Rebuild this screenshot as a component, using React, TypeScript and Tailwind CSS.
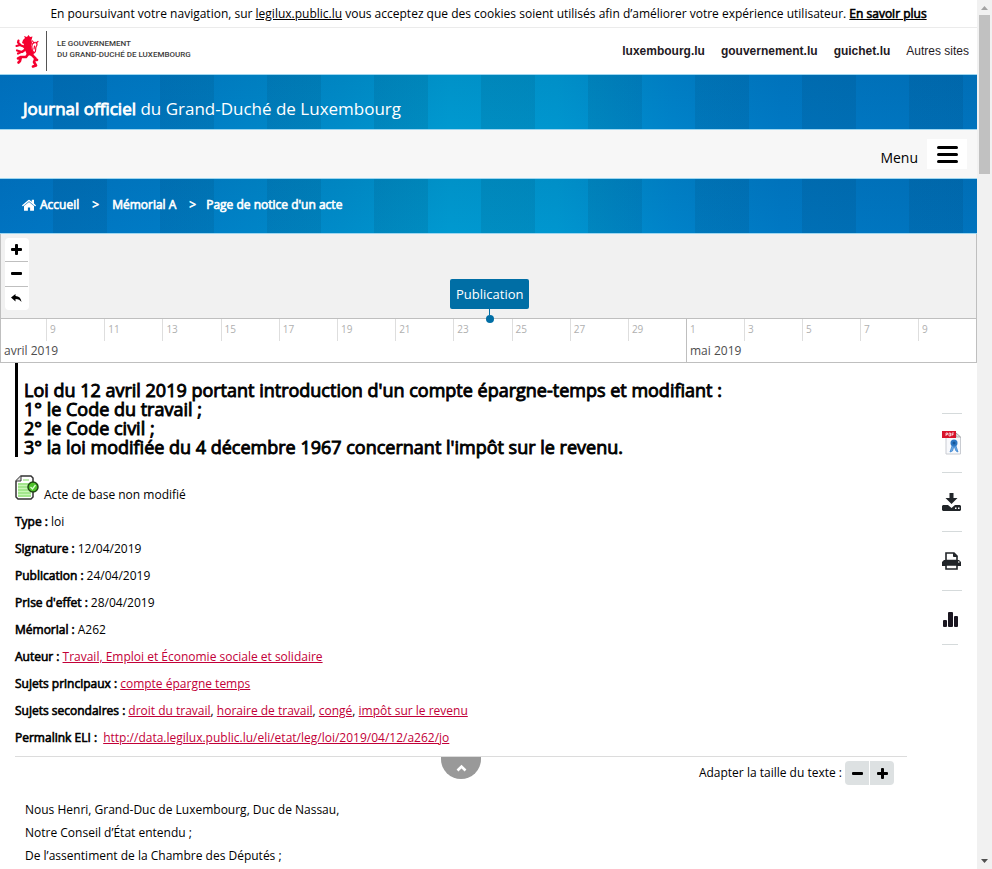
import React from "react";

const BAND =
  "border-y border-[#9ed6f0] bg-[image:linear-gradient(180deg,rgba(0,30,70,0.06),transparent),repeating-linear-gradient(90deg,transparent_0_53px,rgba(0,30,50,0.09)_53px_107px),linear-gradient(90deg,#0073c1_0%,#007bc5_16%,#008cc9_35%,#0099d0_46%,#0096cf_57%,#0082c9_69%,#0078c3_80%,#0073bd_100%)]";
const STRONG = "font-normal [-webkit-text-stroke:0.05em_currentColor]";
const LINK = "text-[#c20038] underline";

function Lion() {
  return (
    <svg viewBox="0 0 25 33" className="h-[33px] w-[25px]" aria-hidden="true">
      <g fill="#f5002f" stroke="none">
        <path d="M9 5 L11 3 L10 1 L13 2 L14.500 0 L16 2 L18.500 1.500 L17.500 5 L18 8 L17 11 L18 15 L20 18 L19 21 L13 20 L11 15 L9 12 L10 9 L8 8 Z" />
      </g>
      <g fill="none" stroke="#f5002f" strokeLinecap="round" strokeLinejoin="round">
        <path d="M11 12 L7 10.500 L4 7.500 M6 10 L2.500 11 M4 7.500 L4.500 5.500" strokeWidth="2.200" />
        <path d="M12 14 L8 17 L3 15.500 M7 17 L4 18.500" strokeWidth="2.200" />
        <path d="M15 18 L12 22 L7 22 L6 26 M7 22 L4 23.500 M6 26 L4.500 27.500" strokeWidth="2.600" />
        <path d="M17 19 L21.500 23.500 L20 27 L22 30.500 L19 31.500 M21 24 L23 25" strokeWidth="2.600" />
        <path d="M20 18 C17 14 17 9 20 7.500 C23 6.500 24 9 22 12 C21 14 23 16 20 18 M20 8 L18.500 6 M22 8 L24 6.500 M20.500 11 L20 14" strokeWidth="1.200" />
      </g>
    </svg>
  );
}

function PlusIcon() {
  return (
    <svg viewBox="0 0 11 11" className="size-[11px]" aria-hidden="true" fill="currentColor">
      <path d="M4 1 Q4 0 5 0 H6 Q7 0 7 1 V4 H10 Q11 4 11 5 V6 Q11 7 10 7 H7 V10 Q7 11 6 11 H5 Q4 11 4 10 V7 H1 Q0 7 0 6 V5 Q0 4 1 4 H4 Z" />
    </svg>
  );
}

function MinusIcon() {
  return (
    <svg viewBox="0 0 11 11" className="size-[11px]" aria-hidden="true" fill="currentColor">
      <rect x="0" y="4" width="11" height="3" rx="1" />
    </svg>
  );
}

function ResetIcon() {
  return (
    <svg viewBox="0 0 11 9" className="h-[9px] w-[11px]" aria-hidden="true" fill="currentColor">
      <path d="M0 3.500 L4.500 0 V2 C8 2 10 4 10.500 8 C9 6 7.500 5 4.500 5 V7.500 Z" />
    </svg>
  );
}

function HomeIcon() {
  return (
    <svg viewBox="26 190 1612 1346" className="h-3 w-[14px]" aria-hidden="true" fill="currentColor">
      <path d="M1408 992v480q0 26-19 45t-45 19H960v-384H704v384H320q-26 0-45-19t-19-45V992q0-1 .5-3t.5-3l575-474 575 474q1 2 1 6zm223-69l-62 74q-8 9-21 11h-3q-13 0-21-7L832 424l-692 577q-12 8-24 7-13-2-21-11l-62-74q-8-10-7-23.500t11-21.500l719-599q32-26 76-26t76 26l244 204V288q0-14 9-23t23-9h192q14 0 23 9t9 23v408l219 182q10 8 11 21.500t-7 23.500z" />
    </svg>
  );
}

function Header() {
  return (
    <header className="flex h-[46px] items-center justify-between pl-[14px] pr-2">
      <a href="#gouvernement" className="flex items-center">
        <Lion />
        <span className="ml-[7px] h-10 w-px bg-[#555]" />
        <span className="ml-[10px] pb-1 font-['Roboto',sans-serif] text-[8px] font-medium leading-[11px] text-[#3c3c3c]">
          LE GOUVERNEMENT
          <br />
          DU GRAND-DUCHÉ DE LUXEMBOURG
        </span>
      </a>
      <nav className="flex gap-4 font-['Liberation_Sans',sans-serif] text-[12px] font-bold text-[#1f1a24]">
        <a href="#lux">luxembourg.lu</a>
        <a href="#gouv">gouvernement.lu</a>
        <a href="#guichet">guichet.lu</a>
        <a href="#autres" className="font-normal">Autres sites</a>
      </nav>
    </header>
  );
}

const DAYS_APRIL = [9, 11, 13, 15, 17, 19, 21, 23, 25, 27, 29];
const DAYS_MAY = [3, 5, 7, 9];

function Timeline() {
  return (
    <section className="relative border-x border-b border-[#bfbfbf] bg-[#f1f1f1]" aria-label="Chronologie">
      <div className="flex h-[84px] pl-1 pt-1">
        <div className="flex h-[72px] w-6 flex-col divide-y divide-[#bfbfbf] overflow-hidden rounded bg-white pr-px text-black">
          <button aria-label="Zoom avant" className="flex flex-1 items-center justify-center"><PlusIcon /></button>
          <button aria-label="Zoom arrière" className="flex flex-1 items-center justify-center"><MinusIcon /></button>
          <button aria-label="Réinitialiser" className="flex flex-1 items-center justify-center"><ResetIcon /></button>
        </div>
      </div>
      <div className="flex h-11 border-t border-[#bfbfbf] bg-white text-[10px] text-[#b0b0b0]">
        <div className="flex w-[685px] flex-col">
          <div className="flex h-[22px] pl-[45px]">
            {DAYS_APRIL.map((d) => (
              <span key={d} className="flex-1 border-l border-[#dedede] pl-[3px] leading-5">{d}</span>
            ))}
          </div>
          <span className="pl-[3px] text-[12px] leading-5 text-[#4d4d4d]">avril 2019</span>
        </div>
        <div className="flex flex-1 flex-col border-l border-[#bfbfbf]">
          <div className="flex h-[22px]">
            <span className="w-[57px] pl-[3px] leading-5">1</span>
            {DAYS_MAY.map((d) => (
              <span key={d} className="w-[58px] border-l border-[#dedede] pl-[3px] leading-5">{d}</span>
            ))}
          </div>
          <span className="pl-[3px] text-[12px] leading-5 text-[#4d4d4d]">mai 2019</span>
        </div>
      </div>
      <div className="absolute left-[449px] top-[45px] flex flex-col items-center">
        <span className="rounded-xs bg-[#006ea5] px-[6px] text-[13px] leading-[30px] text-white">Publication</span>
        <span className="h-[6px] w-px bg-[#006ea5]" />
        <span className="size-2 rounded-full bg-[#006ea5]" />
      </div>
    </section>
  );
}

function ActeIcon() {
  return (
    <svg viewBox="0 0 24 25" className="h-[25px] w-6" aria-hidden="true">
      <path d="M6 1 H16 L18 3 V22 L16 24 H3 L1 22 V6 Z" fill="#fff" stroke="#333" strokeWidth="1.500" />
      <path d="M1 6 H6 V1" fill="#ddd" stroke="#333" />
      <path d="M3 8 H16 V22 H3 Z" fill="#c9f5b8" />
      <path d="M8 5 H14 M3 9 H13 M3 12 H13 M3 15 H13 M3 18 H16 M3 21 H16" stroke="#7fd763" strokeWidth="1.200" />
      <circle cx="18" cy="12" r="5" fill="#4fc42b" stroke="#1f4a12" strokeWidth="1.500" />
      <path d="M15.500 12 L17.500 14 L20.500 10" fill="none" stroke="#d9ffd0" strokeWidth="1.300" />
    </svg>
  );
}

function Row({ label, children }: { label: string; children: React.ReactNode }) {
  return (
    <div className="flex gap-[3px] leading-[27px]">
      <dt className={STRONG}>{label} :</dt>
      <dd>{children}</dd>
    </div>
  );
}

function PdfIcon() {
  return (
    <svg viewBox="0 0 20 24" className="h-6 w-5" aria-hidden="true">
      <path d="M4 2 H14 L18.500 6 V23 H4 Z" fill="#f8f9fc" stroke="#c9ccd2" />
      <path d="M14 2 V6 H18.500 Z" fill="#e5e5e5" stroke="#888" strokeWidth=".6" />
      <path d="M0 0 H14 V7 H0 Z" fill="#d8132c" />
      <path d="M4 5 V2 H5.500 V3.500 H4 M7 2 V5 H8.500 V2 H7 M10 5 V2 H12 M10 3.500 H11.500" fill="none" stroke="#fff" strokeWidth=".7" />
      <path d="M10 15 L8 21 L10.500 20 L12 15 L14 20 L16 21 L14 15" fill="#6da9e4" stroke="#3d86d0" strokeWidth=".8" />
      <circle cx="12" cy="12" r="3.500" fill="#2e78c4" />
      <circle cx="12" cy="12" r="1.500" fill="#155799" />
    </svg>
  );
}

function DownloadIcon() {
  return (
    <svg viewBox="0 0 19 18" className="h-[18px] w-[19px]" aria-hidden="true" fill="#212529">
      <path d="M7.500 0 H11.500 V5 H15.500 L9.500 11 L3.500 5 H7.500 Z" />
      <path d="M1 12 H6 L9.500 15 L13 12 H18 L19 13 V17 L18 18 H1 L0 17 V13 Z" />
      <path d="M13 14.500 H14.500 V16 H13 Z M16 14.500 H17.500 V16 H16 Z" fill="#fff" />
    </svg>
  );
}

function PrintIcon() {
  return (
    <svg viewBox="0 0 19 18" className="h-[18px] w-[19px]" aria-hidden="true">
      <path d="M2 8 H17 L19 10 V14 H0 V10 Z" fill="#212529" />
      <path d="M4 8.500 V1 H12 L15 4 V8.500 Z" fill="#fff" stroke="#212529" strokeWidth="1.600" />
      <path d="M11.500 1 V4.500 H15 Z" fill="#212529" stroke="#212529" />
      <path d="M4 13 H15 V17 H4 Z" fill="#fff" stroke="#212529" strokeWidth="1.600" />
      <circle cx="16.800" cy="10" r=".8" fill="#fff" />
    </svg>
  );
}

function ChartIcon() {
  return (
    <svg viewBox="0 0 15 16" className="h-4 w-[15px]" aria-hidden="true" fill="#1a1620">
      <rect x="0" y="8" width="4" height="7" rx="1" />
      <rect x="5" y="0" width="5" height="15" rx="1" />
      <rect x="11" y="4" width="4" height="11" rx="1" />
    </svg>
  );
}

const TOOLS: [string, React.ReactNode][] = [
  ["PDF signé", <PdfIcon />],
  ["Télécharger", <DownloadIcon />],
  ["Imprimer", <PrintIcon />],
];

function Tools() {
  return (
    <aside className="mr-[15px] w-5 shrink-0 pt-[50px]">
      {TOOLS.map(([name, icon]) => (
        <button key={name} aria-label={name} className="flex h-[59px] w-5 items-center border-t border-[#d5dadb]">
          {icon}
        </button>
      ))}
      <button aria-label="Statistiques" className="flex h-[54px] w-5 items-center border-t border-[#d5dadb] pl-px pt-1">
        <ChartIcon />
      </button>
      <div className="h-px w-4 bg-[#d5dadb]" />
    </aside>
  );
}

function Scrollbar() {
  return (
    <div className="sticky top-0 flex h-screen w-[15px] shrink-0 flex-col items-center justify-between bg-[#f1f1f1]" aria-hidden="true">
      <div className="flex flex-col items-center">
        <svg viewBox="0 0 15 15" className="size-[15px]"><path d="M4 10 L7.500 6 L11 10 Z" fill="#a3a3a3" /></svg>
        <div className="h-[159px] w-[11px] bg-[#c1c1c1]" />
      </div>
      <svg viewBox="0 0 15 15" className="size-[15px]"><path d="M4 5 L7.500 9 L11 5 Z" fill="#505050" /></svg>
    </div>
  );
}

export default function App() {
  return (
    <div className="flex min-h-screen bg-white font-['Open_Sans','Noto_Sans',sans-serif] text-[12px] text-black">
      <div className="min-w-0 flex-1">
        <p className="border-b border-[#ebebeb] text-center leading-[27px]">
          En poursuivant votre navigation, sur <a href="#legilux" className="underline">legilux.public.lu</a> vous acceptez que des cookies soient utilisés afin d’améliorer votre expérience utilisateur.{" "}
          <a href="#plus" className={`underline ${STRONG}`}>En savoir plus</a>
        </p>
        <Header />
        <div className={`${BAND} h-14 px-[23px] pt-3`}>
          <h1 className="text-[17px] leading-[44px] text-white">
            <strong className={STRONG}>Journal officiel</strong> du Grand-Duché de Luxembourg
          </h1>
        </div>
        <div className="flex h-12 items-center justify-end gap-[9px] bg-[#f7f7f7] pr-[10px]">
          <label htmlFor="menu" className="pt-[6px] text-[14px]">Menu</label>
          <button id="menu" className="flex h-[30px] w-10 flex-col items-center justify-center gap-1 bg-white">
            <span className="h-[3px] w-[21px] rounded-xs bg-black" />
            <span className="h-[3px] w-[21px] rounded-xs bg-black" />
            <span className="h-[3px] w-[21px] rounded-xs bg-black" />
          </button>
        </div>
        <nav className={`${BAND} flex h-14 items-center px-[22px] pb-[2px] text-white`}>
          <HomeIcon />
          <a href="#accueil" className={`ml-1 ${STRONG}`}>Accueil</a>
          <span className={`mx-[13px] ${STRONG}`}>&gt;</span>
          <a href="#memorial" className={STRONG}>Mémorial A</a>
          <span className={`ml-[13px] mr-[10px] ${STRONG}`}>&gt;</span>
          <span className={STRONG}>Page de notice d'un acte</span>
        </nav>
        <Timeline />
        <div className="flex gap-[35px]">
          <main className="min-w-0 flex-1 pl-[15px]">
            <h2 className={`border-l-[3px] border-black pl-[6px] pt-[18px] text-[18px] leading-[19px] ${STRONG}`}>
              Loi du 12 avril 2019 portant introduction d'un compte épargne-temps et modifiant :
              <br />1° le Code du travail ;
              <br />2° le Code civil ;
              <br />3° la loi modifiée du 4 décembre 1967 concernant l'impôt sur le revenu.
            </h2>
            <p className="mt-[18px] flex gap-[5px]"><ActeIcon /><span className="pt-[3px] leading-[33px] -mb-[11px]">Acte de base non modifié</span></p>
            <dl className="mt-2 pb-[5px]">
              <Row label="Type">loi</Row>
              <Row label="Signature">12/04/2019</Row>
              <Row label="Publication">24/04/2019</Row>
              <Row label="Prise d'effet">28/04/2019</Row>
              <Row label="Mémorial">A262</Row>
              <Row label="Auteur"><a className={LINK} href="#auteur">Travail, Emploi et Économie sociale et solidaire</a></Row>
              <Row label="Sujets principaux"><a className={LINK} href="#cet">compte épargne temps</a></Row>
              <Row label="Sujets secondaires">
                <a className={LINK} href="#droit">droit du travail</a>, <a className={LINK} href="#horaire">horaire de travail</a>, <a className={LINK} href="#conge">congé</a>, <a className={LINK} href="#impot">impôt sur le revenu</a>
              </Row>
              <Row label="Permalink ELI">{"\u00a0"}<a className={LINK} href="#eli">http://data.legilux.public.lu/eli/etat/leg/loi/2019/04/12/a262/jo</a></Row>
            </dl>
            <div className="grid grid-cols-[1fr_auto_1fr] items-start border-t border-[#dcdcdc]">
              <span />
              <button aria-label="Replier" className="flex h-[22px] w-10 items-center justify-center rounded-b-full bg-[#999] text-white">
                <svg viewBox="0 0 11 8" className="h-2 w-[11px]" aria-hidden="true">
                  <path d="M1.500 6.500 L5.500 2.500 L9.500 6.500" fill="none" stroke="#fff" strokeWidth="2.600" />
                </svg>
              </button>
              <div className="flex items-center justify-end gap-[3px] pr-[13px] pt-1">
                <span>Adapter la taille du texte :</span>
                <div className="flex gap-px overflow-hidden rounded">
                  <button aria-label="Réduire" className="flex size-6 items-center justify-center bg-[#dde1e2]"><MinusIcon /></button>
                  <button aria-label="Agrandir" className="flex size-6 items-center justify-center bg-[#dde1e2]"><PlusIcon /></button>
                </div>
              </div>
            </div>
            <div className="mt-[13px] pl-[10px] leading-[23px]">
              <p>Nous Henri, Grand-Duc de Luxembourg, Duc de Nassau,</p>
              <p>Notre Conseil d’État entendu ;</p>
              <p>De l’assentiment de la Chambre des Députés ;</p>
            </div>
          </main>
          <Tools />
        </div>
      </div>
      <Scrollbar />
    </div>
  );
}
